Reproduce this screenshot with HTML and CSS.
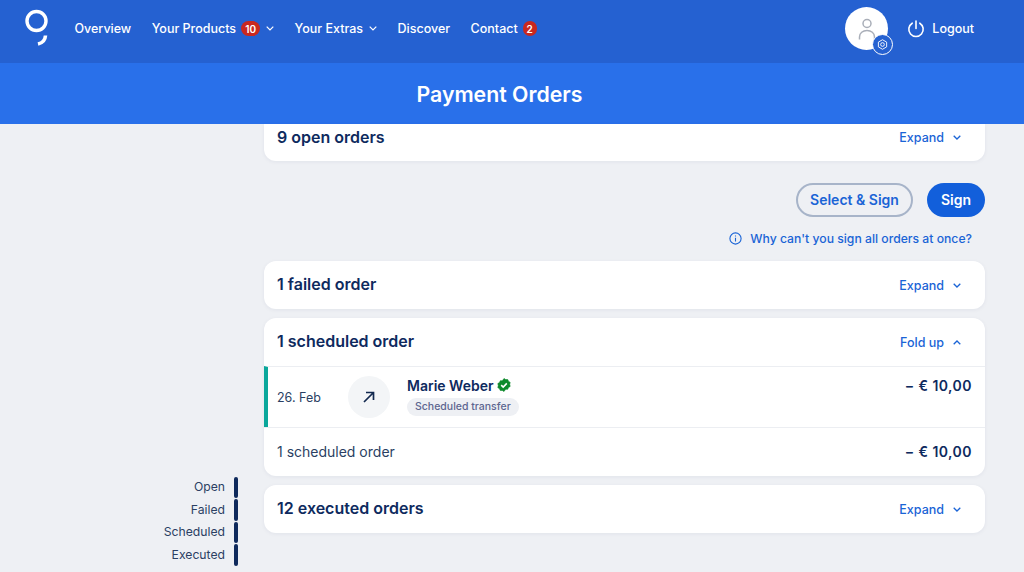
FILE: index.html
```html
<!DOCTYPE html>
<html lang="en">
<head>
    <meta charset="UTF-8">
    <title>Payment Orders</title>
    <link rel="stylesheet" href="styles.css">
</head>
<body>
    <header class="topbar">
        <svg class="logo" width="26" height="40" viewBox="0 0 26 40">
            <circle cx="12.5" cy="13" r="9.5" fill="none" stroke="#fff" stroke-width="3.4"/>
            <path d="M21.5 27.5c-.3 4.500-3 7.500-7.500 8.500" fill="none" stroke="#fff" stroke-width="3.600"/>
        </svg>
        <nav class="nav">
            <a class="nav-link">Overview</a>
            <a class="nav-link">Your Products <span class="badge badge-wide">10</span>
                <svg class="chevron" width="8" height="5" viewBox="0 0 8 5"><path d="M.7 .7 4 4l3.300-3.300" fill="none" stroke="#fff" stroke-width="1.200"/></svg>
            </a>
            <a class="nav-link">Your Extras
                <svg class="chevron" width="8" height="5" viewBox="0 0 8 5"><path d="M.7 .7 4 4l3.300-3.300" fill="none" stroke="#fff" stroke-width="1.200"/></svg>
            </a>
            <a class="nav-link">Discover</a>
            <a class="nav-link">Contact <span class="badge">2</span></a>
        </nav>
        <div class="user">
            <div class="avatar">
                <svg width="20" height="24" viewBox="0 0 20 24" fill="none" stroke="#a9aeb8" stroke-width="1.500">
                    <circle cx="10" cy="6.500" r="4"/>
                    <path d="M2.500 22.500v-2.500c0-4 3.300-6.500 7.500-6.500s7.500 2.500 7.500 6.500v2.500"/>
                </svg>
                <span class="avatar-gear">
                    <svg width="11" height="11" viewBox="0 0 12 12" fill="none" stroke="#fff" stroke-width="1">
                        <path d="M6 .8 10.500 3.400v5.200L6 11.200 1.500 8.600V3.400z" stroke-linejoin="round"/>
                        <circle cx="6" cy="6" r="2"/>
                    </svg>
                </span>
            </div>
            <a class="logout">
                <svg width="18" height="18" viewBox="0 0 18 18" fill="none" stroke="#fff" stroke-width="1.600" stroke-linecap="round">
                    <path d="M5.200 3.200a7.200 7.200 0 1 0 7.600 0"/>
                    <path d="M9 1v7.500"/>
                </svg>
                Logout
            </a>
        </div>
    </header>

    <div class="titlebar">
        <h1>Payment Orders</h1>
    </div>

    <div class="page">
        <aside class="sidebar">
            <div class="jump-item"><span>Open</span><i class="jump-bar"></i></div>
            <div class="jump-item"><span>Failed</span><i class="jump-bar"></i></div>
            <div class="jump-item"><span>Scheduled</span><i class="jump-bar"></i></div>
            <div class="jump-item"><span>Executed</span><i class="jump-bar"></i></div>
        </aside>

        <main class="content">
            <section class="card card-cut">
                <h2>9 open orders</h2>
                <a class="toggle">Expand
                    <svg width="8" height="5" viewBox="0 0 8 5"><path d="M.7 .7 4 4l3.300-3.300" fill="none" stroke="#1a64d6" stroke-width="1.300"/></svg>
                </a>
            </section>

            <div class="actions">
                <button class="btn btn-outline">Select &amp; Sign</button>
                <button class="btn btn-primary">Sign</button>
            </div>
            <a class="why">
                <svg width="13" height="13" viewBox="0 0 13 13" fill="none" stroke="#1a64d6" stroke-width="1.100">
                    <circle cx="6.500" cy="6.500" r="5.600"/>
                    <path d="M6.500 5.800v3.600M6.500 3.500v1.100"/>
                </svg>
                Why can't you sign all orders at once?
            </a>

            <section class="card card-failed">
                <div class="card-head">
                    <h2>1 failed order</h2>
                    <a class="toggle">Expand
                        <svg width="8" height="5" viewBox="0 0 8 5"><path d="M.7 .7 4 4l3.300-3.300" fill="none" stroke="#1a64d6" stroke-width="1.300"/></svg>
                    </a>
                </div>
            </section>

            <section class="card">
                <div class="card-head">
                    <h2>1 scheduled order</h2>
                    <a class="toggle">Fold up
                        <svg width="8" height="5" viewBox="0 0 8 5"><path d="M.7 4.300 4 1l3.300 3.300" fill="none" stroke="#1a64d6" stroke-width="1.300"/></svg>
                    </a>
                </div>
                <div class="order-row">
                    <span class="order-date">26. Feb</span>
                    <span class="order-icon">
                        <svg width="14" height="14" viewBox="0 0 14 14" fill="none" stroke="#12294f" stroke-width="1.700">
                            <path d="M2 12 11.500 2.500M4 2.500h7.500V10"/>
                        </svg>
                    </span>
                    <div class="order-info">
                        <div class="order-name">Marie Weber
                            <svg width="14" height="14" viewBox="0 0 14 14">
                                <path d="M7 .5l1.700 1.100 2-.1.800 1.800 1.700 1.100-.5 2 .5 2-1.700 1.100-.8 1.800-2-.1L7 13.500l-1.700-1.100-2 .1-.8-1.800L.8 9.600l.5-2-.5-2 1.700-1.100.8-1.800 2 .1z" fill="#0d8a2c" stroke="#0d8a2c" stroke-width=".6"/>
                                <path d="M4.200 7.200l2 1.900 3.600-3.700" fill="none" stroke="#fff" stroke-width="1.600"/>
                            </svg>
                        </div>
                        <span class="tag">Scheduled transfer</span>
                    </div>
                    <span class="amount">− € 10,00</span>
                </div>
                <div class="order-sum">
                    <span>1 scheduled order</span>
                    <span class="amount">− € 10,00</span>
                </div>
            </section>

            <section class="card">
                <div class="card-head">
                    <h2>12 executed orders</h2>
                    <a class="toggle">Expand
                        <svg width="8" height="5" viewBox="0 0 8 5"><path d="M.7 .7 4 4l3.300-3.300" fill="none" stroke="#1a64d6" stroke-width="1.300"/></svg>
                    </a>
                </div>
            </section>
        </main>
    </div>
</body>
</html>
```

FILE: styles.css
```css
* {
    box-sizing: border-box;
}

body {
    height: 572px;
    margin: 0;
    overflow: hidden;
    display: flex;
    flex-direction: column;
    font-family: Inter, "Liberation Sans", sans-serif;
    background: #eef0f4;
    color: #0e2a5e;
}

.topbar {
    height: 63px;
    flex-shrink: 0;
    display: flex;
    align-items: center;
    padding: 0 0 6px 24px;
    background: #2561d1;
    color: #fff;
}

.logo {
    flex-shrink: 0;
    margin-top: -2px;
}

.nav {
    display: flex;
    align-items: center;
    gap: 20.500px;
    margin-left: 24.500px;
}

.nav-link {
    display: flex;
    align-items: center;
    gap: 5px;
    font-size: 12.500px;
    font-weight: 500;
    white-space: nowrap;
}

.badge {
    display: inline-flex;
    align-items: center;
    justify-content: center;
    width: 14px;
    height: 15px;
    border-radius: 8px;
    background: #c9281f;
    font-size: 10px;
    font-weight: 600;
}

.badge-wide {
    width: 19px;
}

.chevron {
    margin-left: 1px;
}

.user {
    display: flex;
    align-items: center;
    margin-left: auto;
    padding-right: 50px;
}

.avatar {
    position: relative;
    width: 43px;
    height: 43px;
    display: flex;
    align-items: center;
    justify-content: center;
    border-radius: 50%;
    background: #fff;
}

.avatar-gear {
    position: absolute;
    right: -5px;
    bottom: -5px;
    width: 21px;
    height: 21px;
    display: flex;
    align-items: center;
    justify-content: center;
    border: 1px solid #fff;
    border-radius: 50%;
    background: #2561d1;
}

.logout {
    display: flex;
    align-items: center;
    gap: 7px;
    margin-left: 19px;
    font-size: 12.500px;
    font-weight: 500;
}

.titlebar {
    height: 61px;
    flex-shrink: 0;
    display: flex;
    align-items: center;
    justify-content: center;
    padding-right: 25px;
    background: #2970ea;
}

.titlebar h1 {
    margin: 0;
    font-size: 21.300px;
    font-weight: 600;
    color: #fff;
}

.page {
    flex: 1;
    display: flex;
}

.sidebar {
    width: 264px;
    flex-shrink: 0;
    display: flex;
    flex-direction: column;
    justify-content: flex-end;
    padding: 0 26px 6px 0;
}

.jump-item {
    height: 22.500px;
    display: flex;
    align-items: center;
    justify-content: flex-end;
    gap: 9px;
    font-size: 12.200px;
    color: #2b3f63;
}

.jump-item span {
    margin-top: -1px;
}

.jump-bar {
    width: 4px;
    height: 21.500px;
    border-radius: 2px;
    background: #0f2a5c;
}

.content {
    width: 721px;
}

.card {
    margin-bottom: 9px;
    border-radius: 12px;
    background: #fff;
    box-shadow: 0 1px 4px rgba(18, 41, 79, 0.06);
    overflow: hidden;
}

.card h2 {
    margin: 0;
    font-size: 16px;
    font-weight: 600;
    color: #0e2a5e;
}

.card-cut {
    height: 37px;
    margin-bottom: 22px;
    display: flex;
    align-items: center;
    justify-content: space-between;
    padding: 0 24px 11px 13px;
    border-radius: 0 0 12px 12px;
}

.card-head {
    height: 48px;
    display: flex;
    align-items: center;
    justify-content: space-between;
    padding: 0 24px 2px 13px;
}

.card-head .toggle {
    padding-top: 2px;
}

.toggle {
    display: flex;
    align-items: center;
    gap: 9px;
    font-size: 12.500px;
    font-weight: 500;
    color: #1a64d6;
}

.actions {
    display: flex;
    justify-content: flex-end;
    gap: 14px;
}

.btn {
    height: 34px;
    padding: 0 0 2px;
    border-radius: 17px;
    font-family: inherit;
    font-size: 14px;
    font-weight: 600;
}

.btn-outline {
    width: 117px;
    border: 2px solid #a7b4c9;
    background: transparent;
    color: #1a64d6;
}

.btn-primary {
    width: 58px;
    border: none;
    background: #125fdb;
    color: #fff;
}

.why {
    height: 44px;
    display: flex;
    align-items: center;
    justify-content: flex-end;
    gap: 8px;
    padding: 0 13px 2px 0;
    font-size: 12.200px;
    font-weight: 500;
    color: #1a64d6;
}

.order-row {
    height: 61px;
    display: flex;
    align-items: center;
    padding-right: 13px;
    border-top: 1px solid #eceef2;
    border-left: 4px solid #0aa79b;
}

.order-date {
    width: 80px;
    padding-left: 9px;
    font-size: 12.500px;
    color: #2b3f63;
}

.order-icon {
    width: 42px;
    height: 42px;
    display: flex;
    align-items: center;
    justify-content: center;
    border-radius: 50%;
    background: #f3f5f7;
}

.order-info {
    flex: 1;
    margin: -2px 0 0 17px;
}

.order-name {
    display: flex;
    align-items: center;
    gap: 3px;
    font-size: 14px;
    font-weight: 600;
}

.tag {
    display: inline-block;
    padding: 2px 8px 3px;
    border-radius: 9px;
    background: #eef0f4;
    font-size: 10.500px;
    font-weight: 500;
    color: #5d6690;
}

.amount {
    align-self: flex-start;
    padding-top: 10px;
    font-size: 14px;
    font-weight: 600;
    letter-spacing: 0.45px;
    white-space: nowrap;
}

.order-sum {
    height: 49px;
    display: flex;
    align-items: center;
    justify-content: space-between;
    padding: 0 13px 2px;
    border-top: 1px solid #eceef2;
    font-size: 14px;
    color: #2b3f63;
}

.order-sum .amount {
    align-self: center;
    padding-top: 0;
    color: #0e2a5e;
}
```
